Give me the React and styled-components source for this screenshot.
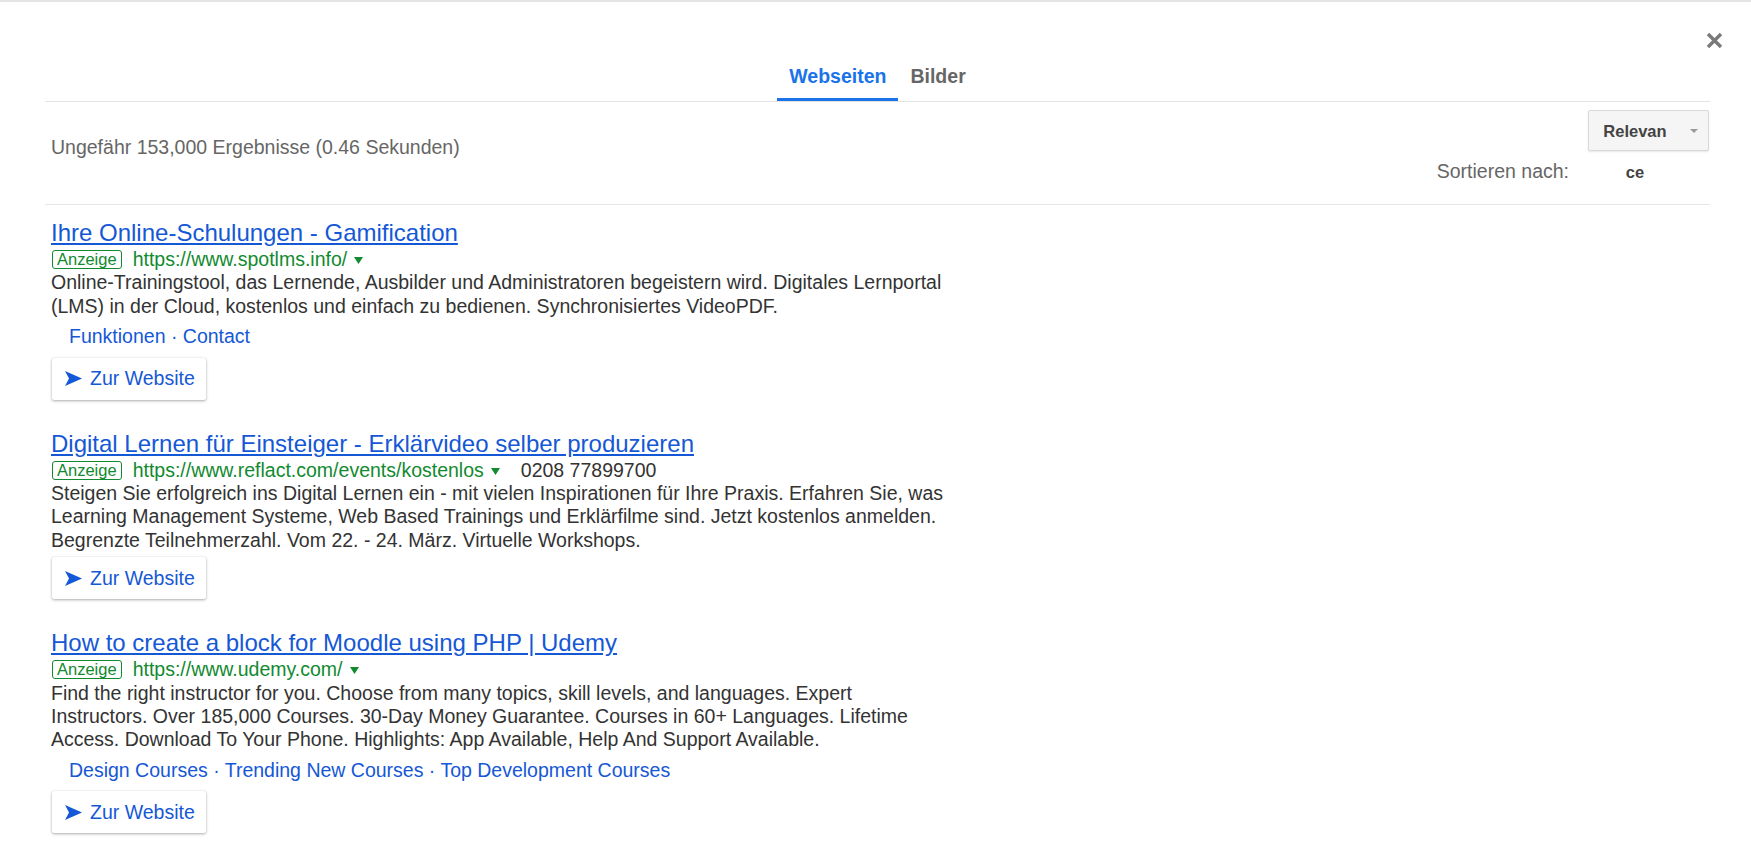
import React from 'react';
import styled, { createGlobalStyle } from 'styled-components';

const GlobalStyle = createGlobalStyle`
  html, body {
    margin: 0;
    padding: 0;
    background: #fff;
  }
  body {
    font-family: 'Liberation Sans', Arial, sans-serif;
  }
`;

const LINK = '#1558d6';
const GREEN = '#128a30';

const Page = styled.div`
  border-top: 2px solid #e4e4e4;
  min-height: 851px;
  background: #fff;
`;

const TopBar = styled.div`
  display: flex;
  justify-content: flex-end;
  height: 63px;
  padding: 30px 28px 0 0;
  box-sizing: border-box;
`;

const CloseButton = styled.button`
  border: 0;
  padding: 0;
  background: none;
  width: 17px;
  height: 17px;
  cursor: pointer;
  svg { display: block; }
`;

const Main = styled.div`
  margin: 0 41px 0 45px;
`;

const TabBar = styled.div`
  display: flex;
  justify-content: center;
  border-bottom: 1px solid #e3e3e3;
`;

const Tab = styled.div`
  padding: 0 12px 11px;
  font-size: 19.5px;
  line-height: 22px;
  font-weight: bold;
  color: ${props => (props.active ? '#1a73e8' : '#666')};
  border-bottom: 3px solid ${props => (props.active ? '#1a73e8' : 'transparent')};
  cursor: pointer;
`;

const Header = styled.div`
  display: flex;
  justify-content: space-between;
  align-items: flex-start;
  height: 103px;
  box-sizing: border-box;
  padding: 8px 1px 0 6px;
  border-bottom: 1px solid #e6e6e6;
`;

const ResultCount = styled.div`
  padding-top: 26px;
  font-size: 19.5px;
  line-height: 23.4px;
  color: #666;
`;

const SortPanel = styled.div`
  font-size: 19.5px;
  color: #666;
  text-align: right;
  white-space: nowrap;
`;

const Select = styled.div`
  position: relative;
  display: inline-block;
  width: 121px;
  height: 41px;
  box-sizing: border-box;
  margin-left: 19px;
  padding-left: 13px;
  border: 1px solid #d9d9d9;
  border-radius: 2px;
  background: #f5f5f5;
  box-shadow: 0 1px 2px rgba(0, 0, 0, 0.1);
  text-align: left;
  font-size: 16.5px;
  font-weight: bold;
  line-height: 41px;
  color: #444;
  white-space: normal;
`;

const SelectText = styled.span`
  display: inline-block;
  width: 66px;
  text-align: center;
  word-break: break-all;
`;

const SelectCaret = styled.span`
  position: absolute;
  right: 10px;
  top: 18px;
  border-left: 4px solid transparent;
  border-right: 4px solid transparent;
  border-top: 4px solid #9a9a9a;
`;

const Results = styled.div`
  padding: 14px 0 0 6px;
`;

const Result = styled.div`
  margin-bottom: 30px;
`;

const TitleRow = styled.div`
  font-size: 24px;
  line-height: 28px;
  margin-bottom: 1px;
`;

const Title = styled.a`
  color: ${LINK};
  text-decoration: underline;
  cursor: pointer;
`;

const UrlRow = styled.div`
  display: flex;
  align-items: center;
  height: 23.4px;
  font-size: 19.5px;
`;

const Badge = styled.span`
  margin-left: 1px;
  padding: 0 4px;
  border: 1px solid ${GREEN};
  border-radius: 3px;
  color: ${GREEN};
  font-size: 16.5px;
  line-height: 17px;
`;

const Url = styled.span`
  margin-left: 11px;
  color: ${GREEN};
`;

const Caret = styled.svg`
  margin-left: 7px;
  margin-top: 2px;
`;

const Phone = styled.span`
  margin-left: 21px;
  color: #333;
`;

const Snippet = styled.div`
  font-size: 19.5px;
  line-height: 23.4px;
  color: #333;
`;

const Sitelinks = styled.div`
  margin-top: 7px;
  padding: 0 0 4px 18px;
  font-size: 19.5px;
  line-height: 23.4px;
  color: ${LINK};
`;

const Sitelink = styled.a`
  color: ${LINK};
  cursor: pointer;
`;

const VisitButton = styled.a`
  display: flex;
  align-items: center;
  gap: 8px;
  width: 154px;
  height: 42px;
  box-sizing: border-box;
  margin: 5px 0 0 1px;
  padding-left: 13px;
  background: #fff;
  border-radius: 2px;
  box-shadow: 0 1px 3px rgba(0, 0, 0, 0.32), 0 0 1px rgba(0, 0, 0, 0.12);
  color: ${LINK};
  font-size: 19.5px;
  cursor: pointer;
`;

const ads = [
  {
    title: 'Ihre Online-Schulungen - Gamification',
    url: 'https://www.spotlms.info/',
    lines: [
      'Online-Trainingstool, das Lernende, Ausbilder und Administratoren begeistern wird. Digitales Lernportal',
      '(LMS) in der Cloud, kostenlos und einfach zu bedienen. Synchronisiertes VideoPDF.',
    ],
    links: ['Funktionen', 'Contact'],
  },
  {
    title: 'Digital Lernen für Einsteiger - Erklärvideo selber produzieren',
    url: 'https://www.reflact.com/events/kostenlos',
    phone: '0208 77899700',
    lines: [
      'Steigen Sie erfolgreich ins Digital Lernen ein - mit vielen Inspirationen für Ihre Praxis. Erfahren Sie, was',
      'Learning Management Systeme, Web Based Trainings und Erklärfilme sind. Jetzt kostenlos anmelden.',
      'Begrenzte Teilnehmerzahl. Vom 22. - 24. März. Virtuelle Workshops.',
    ],
  },
  {
    title: 'How to create a block for Moodle using PHP | Udemy',
    url: 'https://www.udemy.com/',
    lines: [
      'Find the right instructor for you. Choose from many topics, skill levels, and languages. Expert',
      'Instructors. Over 185,000 Courses. 30-Day Money Guarantee. Courses in 60+ Languages. Lifetime',
      'Access. Download To Your Phone. Highlights: App Available, Help And Support Available.',
    ],
    links: ['Design Courses', 'Trending New Courses', 'Top Development Courses'],
  },
];

const SendArrow = () => (
  <svg width="17" height="15" viewBox="0 0 17 15">
    <path d="M0 0 L17 7.5 L0 15 L4 7.5 Z" fill={LINK} />
  </svg>
);

const Ad = ({ ad }) => (
  <Result>
    <TitleRow>
      <Title>{ad.title}</Title>
    </TitleRow>
    <UrlRow>
      <Badge>Anzeige</Badge>
      <Url>{ad.url}</Url>
      <Caret width="9" height="7" viewBox="0 0 9 7">
        <path d="M0 0 H9 L4.5 7 Z" fill={GREEN} />
      </Caret>
      {ad.phone && <Phone>{ad.phone}</Phone>}
    </UrlRow>
    <Snippet>
      {ad.lines.map((line, i) => (
        <React.Fragment key={i}>
          {line}
          {i < ad.lines.length - 1 && <br />}
        </React.Fragment>
      ))}
    </Snippet>
    {ad.links && (
      <Sitelinks>
        {ad.links.map((link, i) => (
          <React.Fragment key={link}>
            {i > 0 && ' · '}
            <Sitelink>{link}</Sitelink>
          </React.Fragment>
        ))}
      </Sitelinks>
    )}
    <VisitButton>
      <SendArrow />
      Zur Website
    </VisitButton>
  </Result>
);

export default function App() {
  return (
    <>
      <GlobalStyle />
      <Page>
        <TopBar>
          <CloseButton aria-label="Schließen">
            <svg width="17" height="17" viewBox="0 0 17 17">
              <path d="M2 2 L15 15 M15 2 L2 15" stroke="#7a7a7a" strokeWidth="3.4" />
            </svg>
          </CloseButton>
        </TopBar>
        <Main>
          <TabBar>
            <Tab active>Webseiten</Tab>
            <Tab>Bilder</Tab>
          </TabBar>
          <Header>
            <ResultCount>Ungefähr 153,000 Ergebnisse (0.46 Sekunden)</ResultCount>
            <SortPanel>
              Sortieren nach:
              <Select>
                <SelectText>Relevance</SelectText>
                <SelectCaret />
              </Select>
            </SortPanel>
          </Header>
          <Results>
            {ads.map(ad => (
              <Ad key={ad.title} ad={ad} />
            ))}
          </Results>
        </Main>
      </Page>
    </>
  );
}
